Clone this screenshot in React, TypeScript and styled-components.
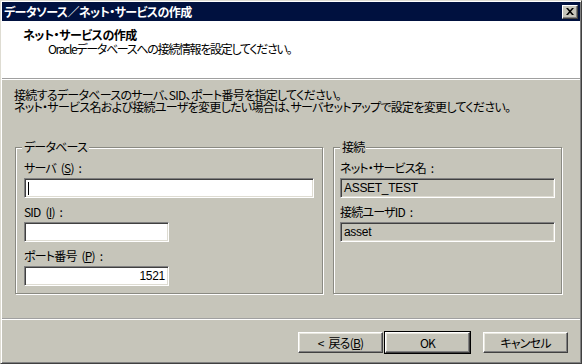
import styled, { createGlobalStyle } from "styled-components";

const GlobalStyle = createGlobalStyle`
  body {
    margin: 0;
    background: #c6c5ba;
  }
  * {
    box-sizing: border-box;
  }
`;

const BG = "#c6c5ba";

const App = () => {
  return (
    <>
      <GlobalStyle />
      <Window>
        <TitleBar>
          <TitleText>データソース／ネット・サービスの作成</TitleText>
          <CloseButton>
            <svg width="8" height="7" viewBox="0 0 8 7">
              <path d="M0 0h2l2 2.2L6 0h2L5 3.5 8 7H6L4 4.8 2 7H0l3-3.5z" fill="#000" />
            </svg>
          </CloseButton>
        </TitleBar>
        <Header>
          <HeaderTitle>ネット・サービスの作成</HeaderTitle>
          <HeaderSub>Oracleデータベースへの接続情報を設定してください。</HeaderSub>
        </Header>
        <Body>
          <Note>
            接続するデータベースのサーバ、SID、ポート番号を指定してください。
            <br />
            ネット・サービス名および接続ユーザを変更したい場合は、サーバセットアップで設定を変更してください。
          </Note>
          <Groups>
            <Group $width={308}>
              <Legend>データベース</Legend>
              <FieldLabel>
                サーバ (<u>S</u>) :
              </FieldLabel>
              <Field $width={290}>
                <Caret />
              </Field>
              <FieldLabel>
                SID (<u>I</u>) :
              </FieldLabel>
              <Field $width={145} />
              <FieldLabel>
                ポート番号 (<u>P</u>) :
              </FieldLabel>
              <Field $width={145} $right>
                1521
              </Field>
            </Group>
            <Group $width={229}>
              <Legend>接続</Legend>
              <FieldLabel $indent={6}>ネット・サービス名 :</FieldLabel>
              <Field $width={215} $readOnly $indent={6}>
                ASSET_TEST
              </Field>
              <FieldLabel $indent={6}>接続ユーザID :</FieldLabel>
              <Field $width={215} $readOnly $indent={6}>
                asset
              </Field>
            </Group>
          </Groups>
        </Body>
        <Footer>
          <Button>
            &lt; 戻る(<u>B</u>)
          </Button>
          <Button $primary>OK</Button>
          <Button $gap={11}>キャンセル</Button>
        </Footer>
      </Window>
    </>
  );
};

export default App;

const Window = styled.div`
  width: 582px;
  height: 364px;
  display: flex;
  flex-direction: column;
  background: ${BG};
  border: 1px solid;
  border-color: #dedcd2 #404040 #404040 #dedcd2;
  box-shadow: inset 1px 1px 0 #fff, inset -1px -1px 0 #808080;
  padding: 1px;
  font-family: "Noto Sans CJK JP", "Liberation Sans", sans-serif;
  font-size: 12px;
  font-feature-settings: "palt";
  letter-spacing: -0.8px;
  word-spacing: 3px;
  color: #000;
`;

const TitleBar = styled.div`
  height: 19px;
  flex-shrink: 0;
  display: flex;
  align-items: center;
  justify-content: space-between;
  padding: 0 2px 0 2px;
  background: #00113f;
`;

const TitleText = styled.div`
  color: #fff;
  font-weight: 700;
  font-size: 12px;
  line-height: 14px;
  letter-spacing: -0.6px;
`;

const CloseButton = styled.div`
  width: 16px;
  height: 14px;
  display: flex;
  align-items: center;
  justify-content: center;
  background: ${BG};
  border: 1px solid;
  border-color: #fff #404040 #404040 #fff;
  box-shadow: inset -1px -1px 0 #808080;
`;

const Header = styled.div`
  height: 58px;
  flex-shrink: 0;
  background: #fff;
  border-bottom: 1px solid #a0a0a0;
  box-shadow: 0 1px 0 #fff;
  padding: 7px 0 0 21px;
`;

const HeaderTitle = styled.div`
  font-weight: 700;
  line-height: 14px;
  letter-spacing: -0.5px;
`;

const HeaderSub = styled.div`
  line-height: 14px;
  margin-left: 25px;
  letter-spacing: -1.3px;
`;

const Body = styled.div`
  flex: 1;
  padding: 10px 0 0 13px;
`;

const Note = styled.div`
  line-height: 12px;
  margin-left: -1px;
  letter-spacing: -0.7px;
`;

const Groups = styled.div`
  display: flex;
  gap: 10px;
  margin-top: 34px;
`;

const Group = styled.div<{ $width: number }>`
  position: relative;
  width: ${(p) => p.$width}px;
  height: 147px;
  display: flex;
  flex-direction: column;
  align-items: flex-start;
  border: 1px solid #8a8a82;
  box-shadow: inset 1px 1px 0 #fff, 1px 1px 0 #fff;
  padding: 13px 7px 0 8px;
`;

const Legend = styled.div`
  position: absolute;
  top: -8px;
  left: 6px;
  padding: 0 2px;
  background: ${BG};
  line-height: 14px;
`;

const FieldLabel = styled.div<{ $indent?: number }>`
  line-height: 14px;
  margin-left: ${(p) => (p.$indent ? p.$indent - 8 : 0)}px;
`;

const Field = styled.div<{
  $width: number;
  $right?: boolean;
  $readOnly?: boolean;
  $indent?: number;
}>`
  width: ${(p) => p.$width}px;
  height: 20px;
  margin: 3px 0 7px ${(p) => (p.$indent ? p.$indent - 8 : 0)}px;
  display: flex;
  align-items: center;
  justify-content: ${(p) => (p.$right ? "flex-end" : "flex-start")};
  padding: 0 3px;
  background: ${(p) => (p.$readOnly ? BG : "#fff")};
  border: 1px solid;
  border-color: #808080 #fff #fff #808080;
  box-shadow: inset 1px 1px 0 #404040, inset -1px -1px 0 #dedcd2;
  font-family: "Liberation Sans", "Noto Sans CJK JP", sans-serif;
  font-size: 12px;
  letter-spacing: -0.3px;
`;

const Caret = styled.span`
  width: 1px;
  height: 13px;
  background: #000;
`;

const Footer = styled.div`
  height: 44px;
  flex-shrink: 0;
  display: flex;
  justify-content: flex-end;
  align-items: flex-start;
  border-top: 1px solid #a0a0a0;
  box-shadow: inset 0 1px 0 #fff;
  padding: 13px 12px 0 0;
  gap: 2px;
`;

const Button = styled.div<{ $primary?: boolean; $gap?: number }>`
  width: 85px;
  height: 21px;
  margin-left: ${(p) => p.$gap ?? 0}px;
  display: flex;
  align-items: center;
  justify-content: center;
  background: ${BG};
  border: 1px solid;
  border-color: #fff #404040 #404040 #fff;
  box-shadow: ${(p) =>
    p.$primary
      ? "0 0 0 1px #000, inset -1px -1px 0 #808080, inset 1px 1px 0 #e8e7de"
      : "inset -1px -1px 0 #808080, inset 1px 1px 0 #e8e7de"};
  line-height: 14px;
`;
